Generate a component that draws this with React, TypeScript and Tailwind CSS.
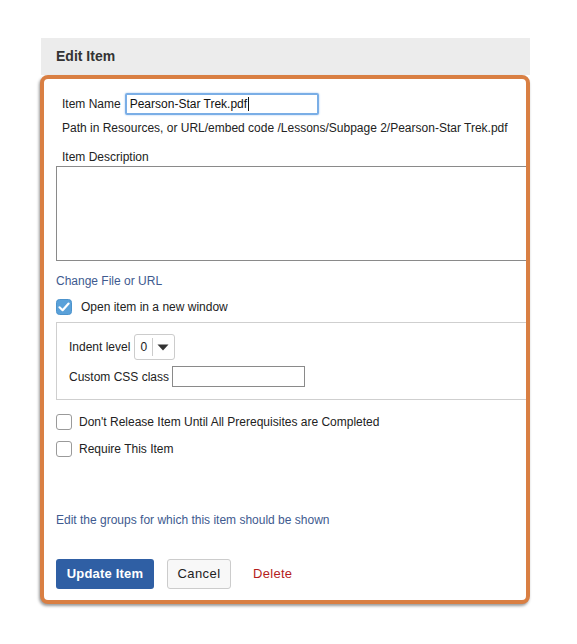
export default function App() {
  const font = { fontFamily: '"Liberation Sans", Arial, sans-serif' };
  return (
    <div className="min-h-[644px] w-[577px] bg-white pt-[38px] text-[12px] text-[#222]" style={font}>
      <div className="ml-[41px] flex h-[37px] w-[489px] items-center bg-[#ececec] pl-[15px]">
        <span className="text-[14px] font-bold text-[#333]">Edit Item</span>
      </div>

      <div className="ml-[40px] box-border h-[529px] w-[490px] overflow-hidden rounded-[8px] border-4 border-[#d97f43] bg-white pl-[12px] shadow-[-1px_2px_3px_rgba(0,0,0,0.4)]">
        {/* Item name */}
        <div className="mt-[14px] flex items-center pl-[6px]">
          <span className="mr-[4px] leading-[16px]">Item Name</span>
          <div className="box-border flex h-[22px] w-[194px] items-center rounded-[2px] border-2 border-[#7aaee6] px-[3px] shadow-[0_0_2px_#9cc3ee]">
            <span className="text-[12px] text-[#111]">Pearson-Star Trek.pdf</span>
            <span className="ml-px h-[14px] w-px bg-[#111]" />
          </div>
        </div>

        <div className="mt-[5px] pl-[6px] leading-[16px]">
          Path in Resources, or URL/embed code /Lessons/Subpage 2/Pearson-Star Trek.pdf
        </div>

        <div className="mt-[13px] pl-[6px] leading-[16px]">Item Description</div>
        <div className="mt-[1px] box-border h-[95px] w-[500px] border border-[#8a8a8a]" />

        <div className="mt-[12px] leading-[16px] text-[#3e5a8f]">Change File or URL</div>

        <div className="mt-[10px] flex h-[16px] items-center">
          <svg width="16" height="16" viewBox="0 0 16 16" className="shrink-0">
            <rect x="0.5" y="0.5" width="15" height="15" rx="3" fill="#5aa1d9" stroke="#4c93cc" />
            <path d="M3.5 8.3 L6.6 11.2 L12.6 4.6" fill="none" stroke="#fff" strokeWidth="2.2" strokeLinecap="round" strokeLinejoin="round" />
          </svg>
          <span className="ml-[9px] leading-[16px]">Open item in a new window</span>
        </div>

        <div className="mt-[7px] box-border h-[78px] w-[500px] border border-[#cfcfcf] pl-[12px] pt-[11px]">
          <div className="flex h-[26px] items-center">
            <span className="mr-[4px]">Indent level</span>
            <div className="box-border flex h-[26px] w-[41px] items-center rounded-[3px] border border-[#cccccc]">
              <span className="ml-[5px] w-[12px]">0</span>
              <span className="h-[18px] w-px bg-[#cccccc]" />
              <svg width="12" height="7" viewBox="0 0 12 7" className="ml-[4px]">
                <path d="M0.5 0.5 L11.5 0.5 L6 6.5 Z" fill="#333" />
              </svg>
            </div>
          </div>
          <div className="mt-[6px] flex h-[21px] items-center">
            <span className="mr-[3px]">Custom CSS class</span>
            <div className="box-border h-[21px] w-[133px] border border-[#8a8a8a]" />
          </div>
        </div>

        <div className="mt-[14px] flex h-[16px] items-center">
          <span className="box-border h-[16px] w-[16px] shrink-0 rounded-[3px] border border-[#9a9a9a] bg-white" />
          <span className="ml-[7px] leading-[16px]">Don't Release Item Until All Prerequisites are Completed</span>
        </div>
        <div className="mt-[11px] flex h-[16px] items-center">
          <span className="box-border h-[16px] w-[16px] shrink-0 rounded-[3px] border border-[#9a9a9a] bg-white" />
          <span className="ml-[7px] leading-[16px]">Require This Item</span>
        </div>

        <div className="mt-[55px] leading-[16px] text-[#3e5a8f]">Edit the groups for which this item should be shown</div>

        <div className="mt-[31px] flex items-center">
          <button className="box-border h-[30px] w-[98px] rounded-[3px] bg-[#2f5fa4] text-[13px] font-bold tracking-[0.2px] text-white">
            Update Item
          </button>
          <button className="ml-[13px] box-border h-[30px] w-[64px] rounded-[3px] border border-[#cccccc] bg-[#f8f8f8] text-[13px] tracking-[0.4px] text-[#222]">
            Cancel
          </button>
          <span className="ml-[22px] text-[13px] tracking-[0.3px] text-[#b51d1d]">Delete</span>
        </div>
      </div>
    </div>
  );
}
